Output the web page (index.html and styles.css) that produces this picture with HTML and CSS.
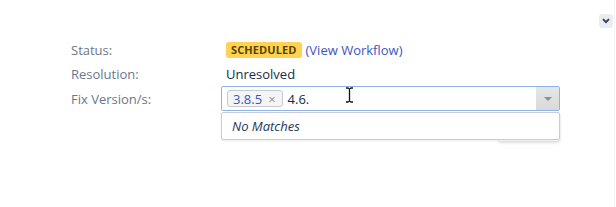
FILE: index.html
```html
<!DOCTYPE html>
<html>
<head>
<meta charset="utf-8">
<link rel="stylesheet" href="styles.css">
</head>
<body>
<div class="page">
  <div class="header">
    <button class="collapse" aria-label="Collapse">
      <svg width="8" height="6" viewBox="0 0 8 6"><path d="M1 1.2 L4 4.2 L7 1.2" fill="none" stroke="#2f3d5c" stroke-width="1.9"/></svg>
    </button>
  </div>
  <div class="fields">
    <div class="label">Status:</div>
    <div class="value"><span class="lozenge">SCHEDULED</span> <a class="link" href="#">(View Workflow)</a></div>
    <div class="label">Resolution:</div>
    <div class="value">Unresolved</div>
    <div class="label">Fix Version/s:</div>
    <div class="value edit">
      <div class="select">
        <div class="select-inner">
          <span class="tag"><span class="tag-text">3.8.5</span><span class="tag-x">×</span></span>
          <span class="typed">4.6.</span>
        </div>
        <div class="drop-btn"><span class="tri"></span></div>
      </div>
      <div class="save-shadow"></div>
      <div class="suggestions"><em>No Matches</em></div>
      <svg class="ibeam" width="9" height="16" viewBox="0 0 9 16"><path d="M1 1 H3.5 M5.5 1 H8 M4.5 1.5 V14.5 M1 15 H3.5 M5.5 15 H8" stroke="#111" stroke-width="1.3" fill="none"/><path d="M3 1.2 Q4.5 1.8 6 1.2 M3 14.8 Q4.5 14.2 6 14.8" stroke="#111" stroke-width="1" fill="none"/></svg>
    </div>
  </div>
</div>
</body>
</html>
```
FILE: styles.css
```css
html, body {
  margin: 0;
  padding: 0;
  background: #fff;
}
body {
  font-family: "Open Sans", "Noto Sans", sans-serif;
  font-size: 13px;
  color: #172b4d;
}
.page {
  position: relative;
  width: 614px;
  height: 207px;
  border-right: 1px solid #f1f2f4;
  box-sizing: content-box;
}
.header {
  display: flex;
  justify-content: flex-end;
  padding: 14px 1px 0 0;
  height: 14px;
}
.collapse {
  width: 14px;
  height: 14px;
  padding: 0;
  border: 0;
  border-radius: 3px;
  background: #ebecf0;
  display: flex;
  align-items: center;
  justify-content: center;
}
.fields {
  display: grid;
  grid-template-columns: 155px 1fr;
  grid-auto-rows: 24px;
  margin: 10px 0 0 71px;
}
.fields .label:nth-of-type(5), .fields .edit { height: 25px; }
.label {
  color: #6b778c;
  display: flex;
  align-items: center;
}
.value {
  display: flex;
  align-items: center;
  gap: 4px;
}
.lozenge {
  background: #ffd351;
  color: #594300;
  font-weight: 700;
  font-size: 11px;
  line-height: 16px;
  height: 16px;
  padding: 0 5px;
  border-radius: 3px;
  letter-spacing: 0.1px;
}
.link {
  color: #3d55c2;
  text-decoration: none;
}
.edit {
  position: relative;
  align-items: stretch;
}
.select {
  margin-left: -5px;
  width: 339px;
  height: 25px;
  box-sizing: border-box;
  border: 1px solid #8eb2ec;
  border-radius: 2px;
  display: flex;
  background: #fff;
}
.select-inner {
  flex: 1;
  display: flex;
  align-items: center;
  padding-left: 5px;
  gap: 5px;
}
.tag {
  display: flex;
  align-items: center;
  height: 17px;
  box-sizing: border-box;
  border: 1px solid #c7c9cf;
  border-radius: 3px;
  background: #f4f5f7;
  padding: 0 6px 0 5px;
  gap: 6px;
}
.tag-text { color: #3d55c2; }
.tag-x { color: #8a8f99; font-size: 13px; }
.typed { color: #172b4d; }
.drop-btn {
  width: 23px;
  background: linear-gradient(#e6e6e6, #d9d9d9);
  display: flex;
  align-items: center;
  justify-content: center;
}
.tri {
  width: 0;
  height: 0;
  border-left: 4px solid transparent;
  border-right: 4px solid transparent;
  border-top: 4px solid #8a8f9a;
}
.suggestions {
  position: absolute;
  left: -5px;
  top: 26px;
  width: 339px;
  height: 28px;
  box-sizing: border-box;
  border: 1px solid #c9ccd2;
  border-radius: 2px;
  background: #fff;
  box-shadow: 0 1px 2px rgba(0,0,0,0.08);
  display: flex;
  align-items: center;
  padding-left: 10px;
  color: #253858;
}
.suggestions em { font-style: italic; }
.save-shadow {
  position: absolute;
  left: 272px;
  top: 26px;
  width: 62px;
  height: 29px;
  border-radius: 3px;
  box-shadow: 0 2px 3px rgba(0,0,0,0.12);
}
.ibeam {
  position: absolute;
  left: 119px;
  top: 1px;
}
```
